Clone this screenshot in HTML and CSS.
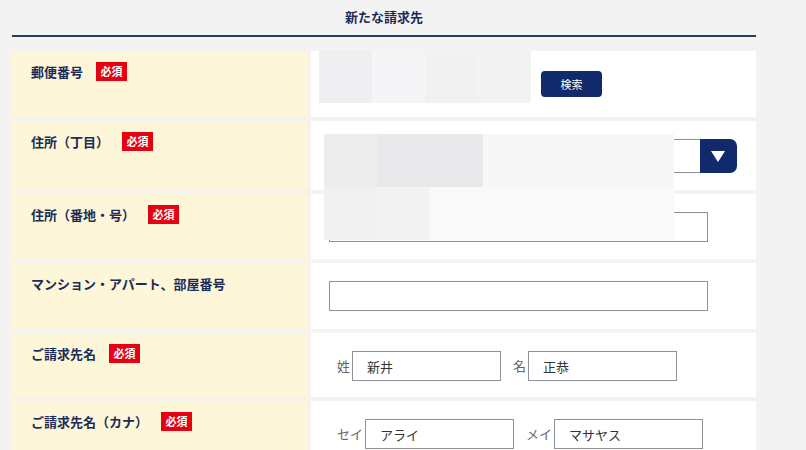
FILE: index.html
```html
<!DOCTYPE html>
<html lang="ja">
<head>
    <meta charset="UTF-8">
    <meta name="viewport" content="width=device-width, initial-scale=1.0">
    <title>新たな請求先</title>
    <link rel="stylesheet" href="styles.css">
</head>
<body>
    <div class="page">
        <h2 class="section-title">新たな請求先</h2>

        <div class="form-table">
            <div class="row row-zip">
                <div class="label">郵便番号<span class="required">必須</span></div>
                <div class="field">
                    <input type="text" class="input zip">
                    <button class="search-btn">検索</button>
                </div>
            </div>
            <div class="row row-select">
                <div class="label">住所（丁目）<span class="required">必須</span></div>
                <div class="field">
                    <div class="select">
                        <span class="select-value"></span>
                        <span class="select-arrow"></span>
                    </div>
                </div>
            </div>
            <div class="row row-short">
                <div class="label">住所（番地・号）<span class="required">必須</span></div>
                <div class="field">
                    <input type="text" class="input wide">
                </div>
            </div>
            <div class="row">
                <div class="label">マンション・アパート、部屋番号</div>
                <div class="field">
                    <input type="text" class="input wide">
                </div>
            </div>
            <div class="row row-name">
                <div class="label">ご請求先名<span class="required">必須</span></div>
                <div class="field pair">
                    <span class="sub">姓</span>
                    <input type="text" class="input half" value="新井">
                    <span class="sub next">名</span>
                    <input type="text" class="input half" value="正恭">
                </div>
            </div>
            <div class="row">
                <div class="label">ご請求先名（カナ）<span class="required">必須</span></div>
                <div class="field pair">
                    <span class="sub">セイ</span>
                    <input type="text" class="input half" value="アライ">
                    <span class="sub next">メイ</span>
                    <input type="text" class="input half" value="マサヤス">
                </div>
            </div>
        </div>

        <!-- pixelated masks over the address fields -->
        <div class="mosaic mosaic-zip">
            <span style="background:#efeff1"></span>
            <span style="background:#f5f5f7"></span>
            <span style="background:#f1f1f2"></span>
            <span style="background:#f3f3f4"></span>
        </div>
        <div class="mosaic mosaic-addr">
            <span style="background:#ededed"></span>
            <span style="background:#e9e9eb;width:106px"></span>
            <span style="background:#f7f7f7;width:191px"></span>
            <span style="background:#f1f1f1"></span>
            <span style="background:#f3f3f3"></span>
            <span style="background:#f9f9f9;width:244px"></span>
        </div>
    </div>
</body>
</html>
```

FILE: styles.css
```css
body {
    margin: 0;
    background-color: #f3f3f3;
    font-family: "Noto Sans CJK JP", "Noto Sans", sans-serif;
    color: #1c2b57;
}

.page {
    position: relative;
    width: 744px;
    margin-left: 12px;
}

.section-title {
    margin: 0;
    padding: 8px 0 9px;
    font-size: 13px;
    line-height: 18px;
    font-weight: bold;
    text-align: center;
    color: #1c2b57;
    border-bottom: 2px solid #2b3a5f;
}

.form-table {
    display: flex;
    flex-direction: column;
    gap: 4px;
    margin-top: 14px;
}

.row {
    display: grid;
    grid-template-columns: 295px 445px;
    column-gap: 4px;
    min-height: 66px;
}

.row-select {
    min-height: 69px;
}

.row-short {
    min-height: 65px;
}

.row-name {
    min-height: 64px;
}

.label {
    display: flex;
    align-items: flex-start;
    padding: 11px 0 0 19px;
    background-color: #fdf6d8;
    font-size: 13px;
    line-height: 19px;
    font-weight: bold;
    color: #1c2b57;
}

.required {
    display: inline-block;
    margin-left: 13px;
    width: 31px;
    height: 19px;
    line-height: 19px;
    background-color: #e50012;
    color: #fff;
    font-size: 11px;
    font-weight: bold;
    text-align: center;
}

.field {
    display: flex;
    align-items: flex-start;
    padding: 18px 0 0 18px;
    background-color: #fff;
}

.row-zip .field {
    padding-top: 16px;
    align-items: center;
    align-self: stretch;
    padding-bottom: 16px;
}

.input {
    box-sizing: border-box;
    height: 30px;
    margin: 0;
    padding: 0 14px;
    border: 1px solid #8e929c;
    border-radius: 0;
    background: #fff;
    font-family: inherit;
    font-size: 13px;
    color: #333;
    outline: none;
}

.zip {
    width: 190px;
    height: 34px;
}

.wide {
    width: 379px;
}

.search-btn {
    margin-left: 22px;
    width: 61px;
    height: 26px;
    border: none;
    border-radius: 4px;
    background-color: #102a6c;
    color: #fff;
    font-family: inherit;
    font-size: 11px;
    cursor: pointer;
}

.select {
    display: flex;
    width: 408px;
    height: 34px;
}

.select-value {
    flex: 1;
    border: 1px solid #8e929c;
    border-right: none;
    background: #fff;
}

.select-arrow {
    position: relative;
    width: 37px;
    background-color: #102a6c;
    border-radius: 0 7px 7px 0;
}

.select-arrow::after {
    content: "";
    position: absolute;
    left: 11px;
    top: 12px;
    border-left: 7px solid transparent;
    border-right: 7px solid transparent;
    border-top: 11px solid #fff;
}

.pair {
    padding-left: 26px;
    align-items: flex-start;
}

.sub {
    height: 30px;
    line-height: 30px;
    margin-right: 2px;
    font-size: 13px;
    color: #666;
}

.sub.next {
    margin-left: 12px;
}

.half {
    width: 149px;
}

.mosaic {
    position: absolute;
    display: flex;
    flex-wrap: wrap;
}

.mosaic span {
    display: block;
    width: 53px;
    height: 53px;
}

.mosaic-zip {
    left: 307px;
    top: 50px;
    width: 212px;
}

.mosaic-addr {
    left: 312px;
    top: 134px;
    width: 350px;
}
```
